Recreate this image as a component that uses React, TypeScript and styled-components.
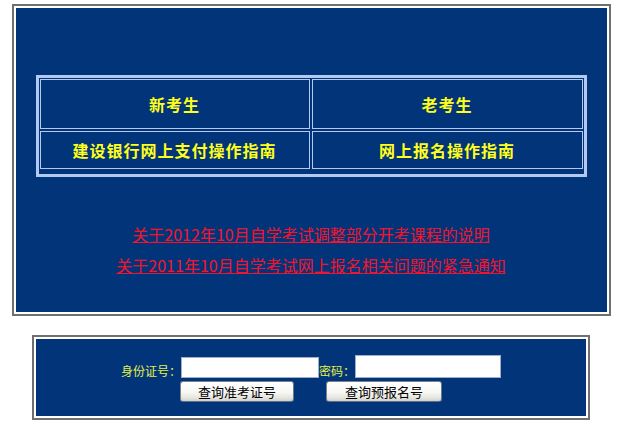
import React from "react";
import styled, { createGlobalStyle } from "styled-components";

const GlobalStyle = createGlobalStyle`
  html, body { margin: 0; padding: 0; background: #ffffff; }
  body { font-family: "Noto Sans CJK SC", "Liberation Sans", sans-serif; }
  * { box-sizing: border-box; }
`;

const Page = styled.div`
  width: 622px;
  padding-top: 4px;
  display: flex;
  flex-direction: column;
  align-items: center;
`;

const Frame = styled.div<{ $w: number; $mt?: number }>`
  width: ${(p) => p.$w}px;
  margin-top: ${(p) => p.$mt ?? 0}px;
  border: 2px solid #707070;
  padding: 2px;
  background: #ffffff;
`;

const BluePanel = styled.div<{ $h: number; $pt: number }>`
  height: ${(p) => p.$h}px;
  padding-top: ${(p) => p.$pt}px;
  background: #02347a;
  display: flex;
  flex-direction: column;
  align-items: center;
`;

const Grid = styled.div`
  width: 551px;
  border: 3px solid #b3c9ef;
  padding: 1px 1px 5px 1px;
  display: grid;
  grid-template-columns: 270px 271px;
  grid-template-rows: 50px 38px;
  gap: 2px;
`;

const Cell = styled.a`
  border: 1px solid #b3c9ef;
  display: flex;
  align-items: center;
  justify-content: center;
  color: #ffff1a;
  font-family: "Noto Sans CJK SC", sans-serif;
  font-weight: bold;
  font-size: 16px;
  letter-spacing: 1px;
  text-decoration: none;
  cursor: pointer;
`;

const Notices = styled.div`
  margin-top: 42px;
  display: flex;
  flex-direction: column;
  align-items: center;
`;

const Notice = styled.a`
  display: block;
  height: 31px;
  line-height: 31px;
  color: #f2142c;
  font-family: "Noto Sans CJK SC", sans-serif;
  font-size: 16px;
  text-decoration: underline;
  text-underline-offset: 1px;
  cursor: pointer;
`;

const FormRow = styled.div`
  display: flex;
  align-items: flex-end;
  justify-content: center;
`;

const Label = styled.span<{ $w: number }>`
  width: ${(p) => p.$w}px;
  color: #e4f24a;
  font-family: "Noto Sans CJK SC", sans-serif;
  font-size: 12px;
  line-height: 14px;
  margin-bottom: 1px;
  white-space: nowrap;
`;

const TextInput = styled.input<{ $w: number; $h: number; $mb: number }>`
  width: ${(p) => p.$w}px;
  height: ${(p) => p.$h}px;
  margin: 0 0 ${(p) => p.$mb}px 0;
  border: 1px solid #9ab0cc;
  background: #ffffff;
  padding: 0 2px;
  font-size: 12px;
  outline: none;
`;

const ButtonRow = styled.div`
  margin-top: 2px;
  display: flex;
  justify-content: center;
  gap: 32px;
`;

const Button = styled.button<{ $w: number }>`
  width: ${(p) => p.$w}px;
  height: 21px;
  padding: 0;
  border: 1px solid #7c8088;
  border-bottom-color: #5a6e8c;
  border-right-color: #6a7890;
  border-radius: 3px;
  background: linear-gradient(#ffffff 0%, #f7f7f4 55%, #e4e3dd 85%, #d2d0c8 100%);
  color: #000000;
  font-family: "Noto Sans CJK SC", sans-serif;
  font-size: 13px;
  line-height: 19px;
  cursor: pointer;
`;

export default function App() {
  return (
    <>
      <GlobalStyle />
      <Page>
        <Frame $w={599}>
          <BluePanel $h={304} $pt={67}>
            <Grid>
              <Cell>新考生</Cell>
              <Cell>老考生</Cell>
              <Cell>建设银行网上支付操作指南</Cell>
              <Cell>网上报名操作指南</Cell>
            </Grid>
            <Notices>
              <Notice>关于2012年10月自学考试调整部分开考课程的说明</Notice>
              <Notice>关于2011年10月自学考试网上报名相关问题的紧急通知</Notice>
            </Notices>
          </BluePanel>
        </Frame>
        <Frame $w={558} $mt={19}>
          <BluePanel $h={77} $pt={16}>
            <FormRow>
              <Label $w={60}>身份证号：</Label>
              <TextInput type="text" $w={138} $h={21} $mb={1} />
              <Label $w={36}>密码：</Label>
              <TextInput type="text" $w={146} $h={23} $mb={1} />
            </FormRow>
            <ButtonRow>
              <Button $w={114}>查询准考证号</Button>
              <Button $w={116}>查询预报名号</Button>
            </ButtonRow>
          </BluePanel>
        </Frame>
      </Page>
    </>
  );
}
